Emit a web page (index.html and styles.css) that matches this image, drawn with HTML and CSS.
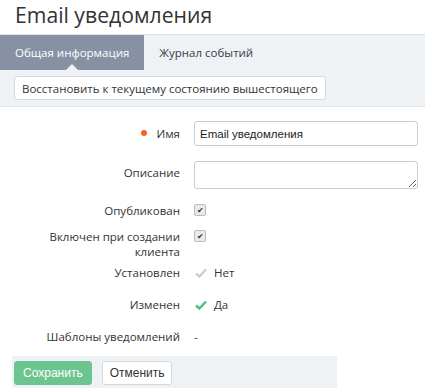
FILE: index.html
```html
<!DOCTYPE html>
<html lang="ru">
<head>
  <meta charset="UTF-8" />
  <title>Email уведомления</title>
  <link rel="stylesheet" href="styles.css">
</head>
<body>
  <h1 class="page-title">Email уведомления</h1>

  <div class="tabs">
    <a href="#" class="tab active">Общая информация</a>
    <a href="#" class="tab">Журнал событий</a>
  </div>

  <div class="toolbar">
    <button class="btn">Восстановить к текущему состоянию вышестоящего</button>
  </div>

  <form class="form">
    <div class="row row-name">
      <label class="label required">Имя</label>
      <div class="field"><input class="input" type="text" value="Email уведомления"></div>
    </div>
    <div class="row row-desc">
      <label class="label">Описание</label>
      <div class="field"><textarea class="input textarea"></textarea></div>
    </div>
    <div class="row row-check row-published">
      <label class="label">Опубликован</label>
      <div class="field"><span class="checkbox">&#10004;</span></div>
    </div>
    <div class="row row-check row-enabled">
      <label class="label">Включен при создании клиента</label>
      <div class="field"><span class="checkbox">&#10004;</span></div>
    </div>
    <div class="row row-text">
      <label class="label">Установлен</label>
      <div class="field">
        <svg class="tick tick-off" width="12" height="10" viewBox="0 0 12 10"><path d="M1 5.5l3.3 3L11 1.5" fill="none" stroke="currentColor" stroke-width="2.4"/></svg>
        Нет
      </div>
    </div>
    <div class="row row-text">
      <label class="label">Изменен</label>
      <div class="field">
        <svg class="tick tick-on" width="12" height="10" viewBox="0 0 12 10"><path d="M1 5.5l3.3 3L11 1.5" fill="none" stroke="currentColor" stroke-width="2.4"/></svg>
        Да
      </div>
    </div>
    <div class="row row-text row-last">
      <label class="label">Шаблоны уведомлений</label>
      <div class="field">-</div>
    </div>

    <div class="actions">
      <button type="button" class="btn btn-footer btn-save">Сохранить</button>
      <button type="button" class="btn btn-footer">Отменить</button>
    </div>
  </form>
</body>
</html>
```

FILE: styles.css
```css
* { box-sizing: border-box; margin: 0; padding: 0; }
body {
  font-family: 'Open Sans', sans-serif;
  font-size: 11.5px;
  color: #333;
  background: #fff;
  overflow: hidden;
}

.page-title {
  font-size: 21.2px;
  font-weight: 400;
  line-height: 30px;
  padding: 0 0 4px 15px;
  color: #333;
}

.tabs {
  display: flex;
  height: 36px;
  background: #eff2f5;
  border-top: 1px solid #dde2e8;
}
.tab {
  position: relative;
  display: flex;
  align-items: center;
  padding: 0 15px;
  color: #3a3a4a;
  text-decoration: none;
}
.tab.active {
  background: #8791a3;
  color: #fff;
}
.tab.active::after {
  content: "";
  position: absolute;
  left: 50%;
  bottom: 0;
  margin-left: -6px;
  border: 6px solid transparent;
  border-bottom-color: #eff2f5;
  border-top: 0;
}

.toolbar {
  background: #eff2f5;
  padding: 6px 14px;
  border-bottom: 1px solid #dde2e8;
}

.btn {
  font-family: 'Open Sans', sans-serif;
  font-size: 11.5px;
  color: #333;
  background: #fff;
  border: 1px solid #d3d8df;
  border-radius: 3px;
  height: 24px;
  padding: 0 7px;
  cursor: pointer;
}

.form { padding-top: 14px; }
.row {
  display: flex;
  align-items: flex-start;
}
.label {
  width: 180px;
  text-align: right;
  line-height: 15px;
  padding-left: 30px;
}
.label.required::before {
  content: "";
  display: inline-block;
  width: 6px;
  height: 6px;
  border-radius: 50%;
  background: #f26522;
  margin-right: 9px;
  vertical-align: 2px;
}
.field {
  flex: 1;
  padding-left: 14px;
  padding-right: 7px;
  line-height: 15px;
}
.input {
  display: block;
  width: 100%;
  height: 25px;
  border: 1px solid #c7ccd3;
  border-radius: 3px;
  padding: 0 5px;
  font-family: 'Liberation Sans', Arial, sans-serif;
  font-size: 11.5px;
  color: #222;
}
.textarea {
  height: 28px;
  resize: vertical;
}

.row-name { margin-bottom: 15px; }
.row-name .label { padding-top: 5px; }
.row-desc { margin-bottom: 14px; }
.row-desc .label { padding-top: 4px; }
.row-published { margin-bottom: 11px; }
.row-enabled { margin-bottom: 6px; }

.checkbox {
  display: inline-block;
  width: 12px;
  height: 12px;
  border: 1px solid #b8bcc2;
  border-radius: 2px;
  background: #e9eaec;
  font-size: 8px;
  line-height: 10px;
  text-align: center;
  color: #333;
  vertical-align: top;
  margin-top: 1px;
}

.row-text { margin-bottom: 17px; }
.row-last { margin-bottom: 12px; }
.tick { vertical-align: -1px; margin-right: 4px; margin-left: 1px; }
.tick-off { color: #c9ced6; }
.tick-on { color: #4fbd7c; }

.actions {
  display: flex;
  gap: 10px;
  margin: 0 88px 0 12px;
  padding: 5px 2px 8px;
  background: #eff2f5;
}
.btn-footer {
  font-family: 'Liberation Sans', Arial, sans-serif;
  font-size: 12px;
  padding: 0 7px;
}
.btn-save {
  background: #6cc58e;
  border-color: #6cc58e;
  color: #fff;
  padding: 0 8px;
}
```
